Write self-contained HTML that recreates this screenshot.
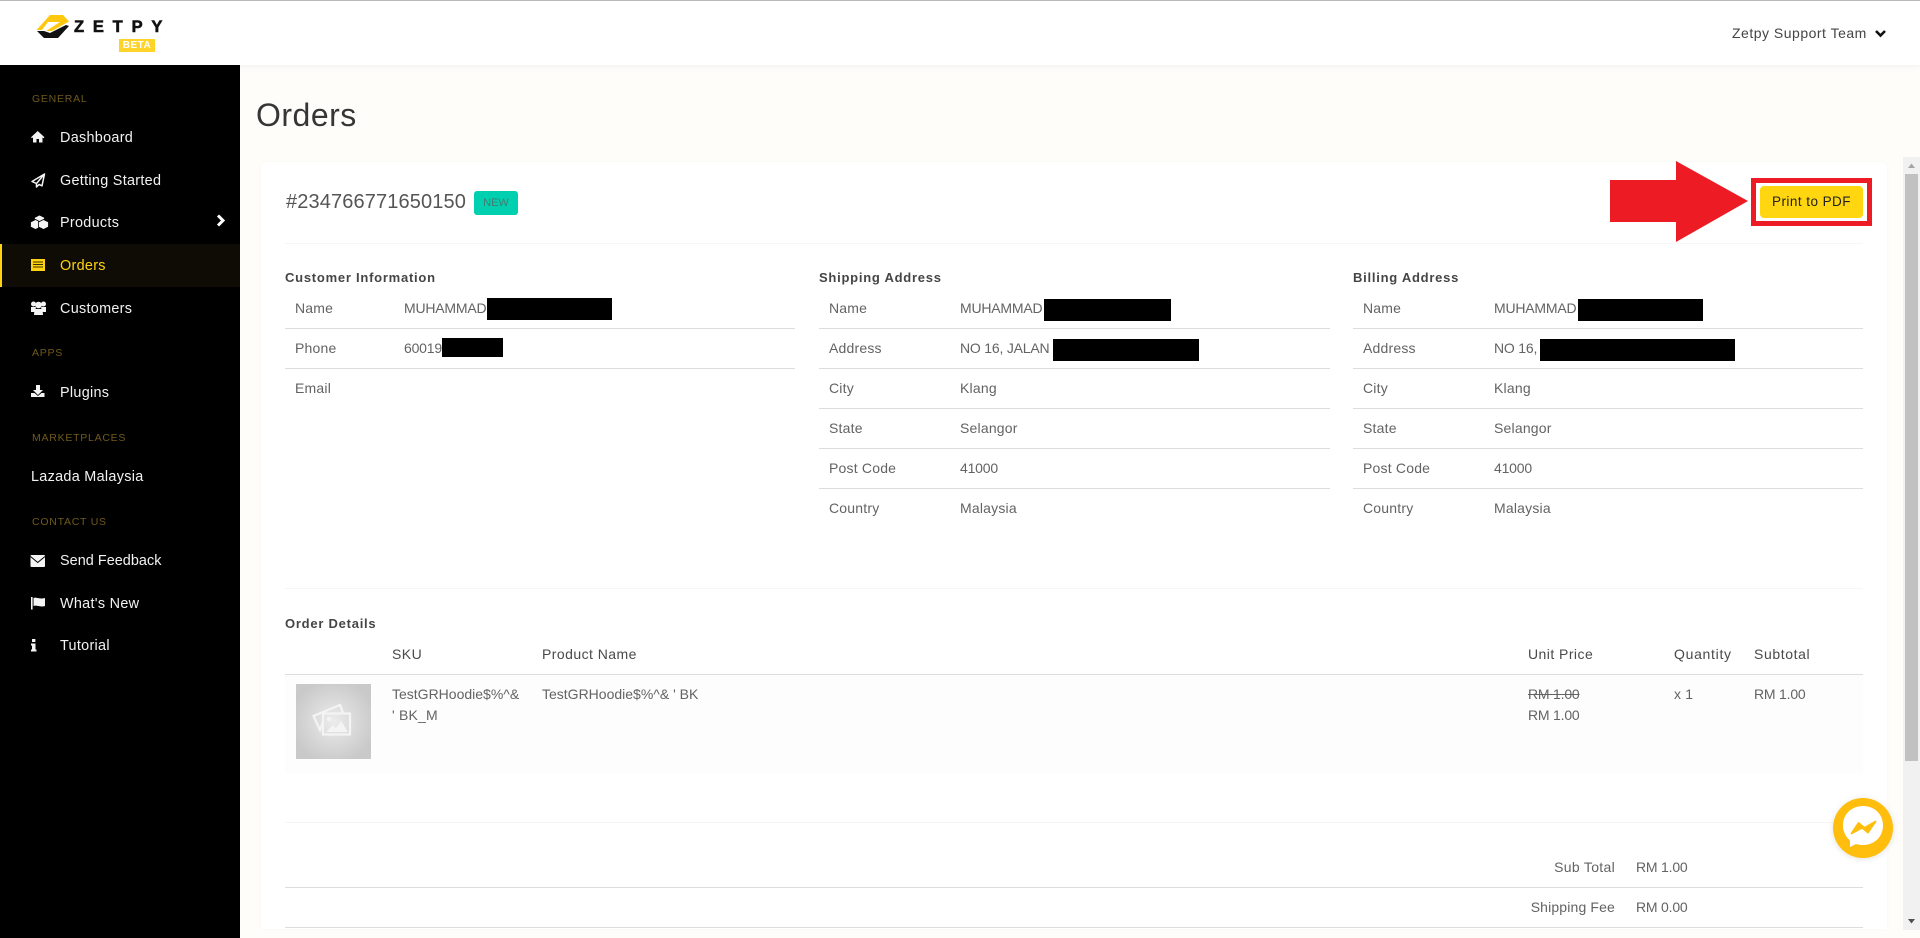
<!DOCTYPE html>
<html lang="en">
<head>
<meta charset="utf-8">
<title>Orders</title>
<style>
html,body{margin:0;padding:0;width:1920px;height:938px;overflow:hidden;background:#fffdf9;font-family:"Liberation Sans",Arial,sans-serif;}
div,span{box-sizing:border-box;}
.a{position:absolute;}
.t{position:absolute;line-height:20px;height:20px;white-space:nowrap;font-size:14px;color:#636363;letter-spacing:.2px;}
.n{letter-spacing:-.2px;}
.b{background:#000;position:absolute;}
.l{position:absolute;height:1px;background:#dddddd;}
.lf{position:absolute;height:1px;background:#f6f6f6;}
.s{position:absolute;line-height:20px;height:20px;white-space:nowrap;font-size:14.4px;color:#f2f2f2;left:60px;letter-spacing:.3px;}
.h{position:absolute;line-height:14px;height:14px;white-space:nowrap;font-size:10.5px;color:#6f5a1a;left:32px;letter-spacing:.75px;}
.m{font-weight:bold;font-size:13px;color:#454545;letter-spacing:.75px;}
.c{color:#4a4a4a;letter-spacing:.45px;}
</style>
</head>
<body>
<!-- page top line and header -->
<div class="a" style="left:0;top:0;width:1920px;height:65px;background:#fff;box-shadow:0 2px 6px rgba(0,0,0,.05);"></div>
<div class="a" style="left:0;top:0;width:1920px;height:1px;background:#b9b9b9;"></div>
<!-- sidebar -->
<div class="a" style="left:0;top:65px;width:240px;height:873px;background:#000;"></div>
<div class="a" style="left:0;top:244px;width:240px;height:43px;background:#0f0c05;"></div>
<div class="a" style="left:0;top:244px;width:2px;height:43px;background:#ffd30f;"></div>

<div class="h" style="top:92px;">GENERAL</div>
<div class="s" style="top:128px;">Dashboard</div>
<div class="s" style="top:171px;">Getting Started</div>
<div class="s" style="top:213px;">Products</div>
<div class="s" style="top:256px;color:#ffd30f;">Orders</div>
<div class="s" style="top:299px;">Customers</div>
<div class="h" style="top:346px;">APPS</div>
<div class="s" style="top:383px;">Plugins</div>
<div class="h" style="top:431px;">MARKETPLACES</div>
<div class="s" style="top:467px;left:31px;">Lazada Malaysia</div>
<div class="h" style="top:515px;">CONTACT US</div>
<div class="s" style="top:551px;letter-spacing:.05px;">Send Feedback</div>
<div class="s" style="top:594px;">What's New</div>
<div class="s" style="top:636px;">Tutorial</div>

<!-- header texts -->
<div class="t" style="left:1732px;top:23px;color:#444;letter-spacing:.5px;">Zetpy Support Team</div>
<div class="a" style="left:74px;top:17px;height:20px;line-height:20px;font-size:16.5px;font-weight:bold;color:#111;letter-spacing:8.8px;white-space:nowrap;-webkit-text-stroke:.6px #111;">ZETPY</div>
<div class="a" style="left:119px;top:39px;width:36px;height:13px;background:#ffd42a;color:#fff;font-size:10px;font-weight:bold;line-height:13px;text-align:center;letter-spacing:.5px;">BETA</div>

<!-- page heading -->
<div class="a" style="left:256px;top:95px;height:40px;line-height:40px;font-size:32px;color:#363636;letter-spacing:.5px;white-space:nowrap;">Orders</div>

<!-- card -->
<div class="a" style="left:261px;top:162px;width:1626px;height:767px;background:#fff;border-radius:6px 6px 0 0;box-shadow:0 0 4px rgba(0,0,0,.03);"></div>

<div class="a" style="left:286px;top:187px;height:30px;line-height:30px;font-size:20px;color:#555;letter-spacing:.13px;white-space:nowrap;">#234766771650150</div>
<div class="a" style="left:474px;top:191px;width:44px;height:24px;background:#00cfb0;border-radius:3px;color:#3f7f73;font-size:11px;line-height:25px;text-align:center;">NEW</div>

<div class="a" style="left:1760px;top:186px;width:103px;height:32px;background:#ffd60f;border-radius:4px;color:#222;font-size:13.5px;line-height:32px;text-align:center;letter-spacing:.45px;white-space:nowrap;">Print to PDF</div>
<div class="a" style="left:1751px;top:178px;width:121px;height:48px;border:5px solid #ed1c24;"></div>

<div class="lf" style="left:285px;top:243px;width:1578px;"></div>

<!-- customer -->
<div class="t m" style="left:285px;top:268px;">Customer Information</div>
<div class="t" style="left:295px;top:298px;">Name</div>
<div class="t n" style="left:404px;top:298px;">MUHAMMAD</div>
<div class="b" style="left:487px;top:298px;width:125px;height:22px;"></div>
<div class="l" style="left:285px;top:328px;width:510px;"></div>
<div class="t" style="left:295px;top:338px;">Phone</div>
<div class="t n" style="left:404px;top:338px;">60019</div>
<div class="b" style="left:442px;top:338px;width:61px;height:19px;"></div>
<div class="l" style="left:285px;top:368px;width:510px;"></div>
<div class="t" style="left:295px;top:378px;">Email</div>

<!-- shipping -->
<div class="t m" style="left:819px;top:268px;">Shipping Address</div>
<div class="t" style="left:829px;top:298px;">Name</div>
<div class="t n" style="left:960px;top:298px;">MUHAMMAD</div>
<div class="b" style="left:1044px;top:299px;width:127px;height:22px;"></div>
<div class="l" style="left:819px;top:328px;width:511px;"></div>
<div class="t" style="left:829px;top:338px;">Address</div>
<div class="t n" style="left:960px;top:338px;">NO 16, JALAN</div>
<div class="b" style="left:1053px;top:339px;width:146px;height:22px;"></div>
<div class="l" style="left:819px;top:368px;width:511px;"></div>
<div class="t" style="left:829px;top:378px;">City</div>
<div class="t" style="left:960px;top:378px;">Klang</div>
<div class="l" style="left:819px;top:408px;width:511px;"></div>
<div class="t" style="left:829px;top:418px;">State</div>
<div class="t" style="left:960px;top:418px;">Selangor</div>
<div class="l" style="left:819px;top:448px;width:511px;"></div>
<div class="t" style="left:829px;top:458px;">Post Code</div>
<div class="t n" style="left:960px;top:458px;">41000</div>
<div class="l" style="left:819px;top:488px;width:511px;"></div>
<div class="t" style="left:829px;top:498px;">Country</div>
<div class="t" style="left:960px;top:498px;">Malaysia</div>

<!-- billing -->
<div class="t m" style="left:1353px;top:268px;">Billing Address</div>
<div class="t" style="left:1363px;top:298px;">Name</div>
<div class="t n" style="left:1494px;top:298px;">MUHAMMAD</div>
<div class="b" style="left:1578px;top:299px;width:125px;height:22px;"></div>
<div class="l" style="left:1353px;top:328px;width:510px;"></div>
<div class="t" style="left:1363px;top:338px;">Address</div>
<div class="t n" style="left:1494px;top:338px;">NO 16,</div>
<div class="b" style="left:1540px;top:339px;width:195px;height:22px;"></div>
<div class="l" style="left:1353px;top:368px;width:510px;"></div>
<div class="t" style="left:1363px;top:378px;">City</div>
<div class="t" style="left:1494px;top:378px;">Klang</div>
<div class="l" style="left:1353px;top:408px;width:510px;"></div>
<div class="t" style="left:1363px;top:418px;">State</div>
<div class="t" style="left:1494px;top:418px;">Selangor</div>
<div class="l" style="left:1353px;top:448px;width:510px;"></div>
<div class="t" style="left:1363px;top:458px;">Post Code</div>
<div class="t n" style="left:1494px;top:458px;">41000</div>
<div class="l" style="left:1353px;top:488px;width:510px;"></div>
<div class="t" style="left:1363px;top:498px;">Country</div>
<div class="t" style="left:1494px;top:498px;">Malaysia</div>

<div class="lf" style="left:285px;top:588px;width:1578px;"></div>

<!-- order details -->
<div class="t m" style="left:285px;top:614px;">Order Details</div>
<div class="t c" style="left:392px;top:644px;">SKU</div>
<div class="t c" style="left:542px;top:644px;">Product Name</div>
<div class="t c" style="left:1528px;top:644px;">Unit Price</div>
<div class="t c" style="left:1674px;top:644px;letter-spacing:.7px;">Quantity</div>
<div class="t c" style="left:1754px;top:644px;letter-spacing:.6px;">Subtotal</div>
<div class="l" style="left:285px;top:674px;width:1578px;"></div>
<div class="a" style="left:285px;top:675px;width:1578px;height:98px;background:#fdfdfd;"></div>
<div class="a" style="left:296px;top:684px;width:75px;height:75px;background:radial-gradient(circle at 50% 50%,#ececec 0%,#dcdcdc 35%,#c9c9c9 80%);"></div>
<div class="t" style="left:392px;top:684px;letter-spacing:0;">TestGRHoodie$%^&amp;</div>
<div class="t" style="left:392px;top:705px;">' BK_M</div>
<div class="t" style="left:542px;top:684px;letter-spacing:0;">TestGRHoodie$%^&amp; ' BK</div>
<div class="t n" style="left:1528px;top:684px;text-decoration:line-through;">RM 1.00</div>
<div class="t n" style="left:1528px;top:705px;">RM 1.00</div>
<div class="t" style="left:1674px;top:684px;">x 1</div>
<div class="t n" style="left:1754px;top:684px;">RM 1.00</div>

<div class="lf" style="left:285px;top:822px;width:1578px;"></div>
<div class="t" style="right:305px;top:857px;letter-spacing:.3px;">Sub Total</div>
<div class="t n" style="left:1636px;top:857px;">RM 1.00</div>
<div class="l" style="left:285px;top:887px;width:1578px;"></div>
<div class="t" style="right:305px;top:897px;letter-spacing:.15px;">Shipping Fee</div>
<div class="t n" style="left:1636px;top:897px;">RM 0.00</div>
<div class="l" style="left:285px;top:927px;width:1578px;"></div>

<!-- scrollbar -->
<div class="a" style="left:1903px;top:157px;width:17px;height:773px;background:#f1f1f1;"></div>
<div class="a" style="left:1905px;top:174px;width:13px;height:587px;background:#c1c1c1;"></div>

<!-- icon and graphic overlay -->
<svg class="a" style="left:0;top:0;" width="1920" height="938" viewBox="0 0 1920 938" xmlns="http://www.w3.org/2000/svg">
  <!-- logo -->
  <path d="M36.500 30 50 15H63L69 21.500 52 31H46L60 22H48L42 30Z" fill="#fdc80d"/>
  <path d="M37 31H44L50 33 66 25 69 26 58 38H44Z" fill="#111"/>
  <!-- home -->
  <path d="M37.700 131 31 137.200 32 138.300 33 137.400V142.500H36.500V139H39V142.500H42.500V137.400L43.500 138.300 44.500 137.200Z" fill="#f4f4f4"/>
  <!-- plane -->
  <path d="M44.500 174 32 181.500 36.500 183.500ZM44.500 174 36.500 183.500V187L39 184.500 42 185.800Z" fill="none" stroke="#f4f4f4" stroke-width="1.500" stroke-linejoin="round"/>
  <!-- cubes -->
  <g fill="#f4f4f4" stroke="#000" stroke-width=".8">
    <path d="M39.500 215 44.500 217.500V222.500L39.500 225 34.500 222.500V217.500Z"/>
    <path d="M35.500 219.500 40.500 222V227L35.500 229.500 30.500 227V222Z"/>
    <path d="M43.500 219.500 48.500 222V227L43.500 229.500 38.500 227V222Z"/>
  </g>
  <!-- orders -->
  <rect x="31" y="259" width="14" height="12" fill="#ffd30f"/>
  <path d="M33 262H43M33 264.500H43M33 267H43" stroke="#3a2f05" stroke-width="1"/>
  <!-- users -->
  <g fill="#f4f4f4">
    <circle cx="33.500" cy="304" r="2.500"/><circle cx="43.500" cy="304" r="2.500"/><circle cx="38.500" cy="305" r="3.300"/>
    <path d="M31 307H36L35 312H31ZM41 307H46V312H42Z"/>
    <path d="M34.500 309H42.500L43 315H34Z"/>
  </g>
  <!-- download -->
  <path d="M36 385H40V390H43L38 395 33 390H36Z" fill="#f4f4f4"/>
  <path d="M31 393H34.500L38 396 41.500 393H44.500V397H31Z" fill="#f4f4f4"/>
  <!-- envelope -->
  <rect x="30.500" y="555" width="14.500" height="12" rx="1" fill="#f4f4f4"/>
  <path d="M30.500 556.500 37.700 562.500 45 556.500" fill="none" stroke="#000" stroke-width="1"/>
  <!-- flag -->
  <rect x="31" y="597" width="1.600" height="12.500" fill="#f4f4f4"/>
  <path d="M33.500 598C36 596.800 38.500 599.500 45 598V606C39.500 607.500 37 604.800 33.500 606Z" fill="#f4f4f4"/>
  <!-- info -->
  <rect x="32" y="639" width="3.400" height="3" fill="#f4f4f4"/>
  <path d="M31 643.500H35.500V649.500H36.500V651.500H31V649.500H32V645.500H31Z" fill="#f4f4f4"/>
  <!-- chevrons -->
  <path d="M218 215.500 223 220.500 218 225.500" fill="none" stroke="#fff" stroke-width="3"/>
  <path d="M1876 31 1880.500 35.500 1885 31" fill="none" stroke="#111" stroke-width="2.600"/>
  <!-- red arrow -->
  <path d="M1610 180H1676V161L1748 201 1676 242V222H1610Z" fill="#ed1c24"/>
  <!-- image placeholder -->
  <g fill="none" stroke="#f4f4f4" stroke-width="2.200">
    <rect x="323" y="713.500" width="27" height="21"/>
    <path d="M323 722 L320 730 L313.500 716 L340 705 L343 713"/>
  </g>
  <circle cx="329" cy="719" r="2.300" fill="#f4f4f4"/>
  <path d="M326 732 333 725 336 728 341 721 348 732Z" fill="#f4f4f4"/>
  <!-- scrollbar arrows -->
  <path d="M1911.500 163.500 1915 168H1908Z" fill="#a5a5a5"/>
  <path d="M1908 919H1915L1911.500 923.500Z" fill="#505050"/>
  <!-- messenger -->
  <defs><filter id="f" x="-30%" y="-30%" width="160%" height="160%"><feDropShadow dx="0" dy="1" stdDeviation="3" flood-color="#000" flood-opacity=".12"/></filter></defs>
  <circle cx="1863" cy="828" r="30" fill="#ffbe0b" filter="url(#f)"/>
  <path d="M1863 806C1851.500 806 1843 814.200 1843 825.500C1843 832 1846 837 1850 840.500L1850 847 1856 844C1858 844.700 1860.500 845 1863 845C1874.500 845 1883 836.800 1883 825.500C1883 814.200 1874.500 806 1863 806Z" fill="#fff"/>
  <path d="M1851.500 833.500 1858.500 823 1864.500 827.800 1875.500 821.500 1868 832.500 1862 827.800Z" fill="#ffbe0b" stroke="#ffbe0b" stroke-width="1.800" stroke-linejoin="round"/>
</svg>
</body>
</html>
